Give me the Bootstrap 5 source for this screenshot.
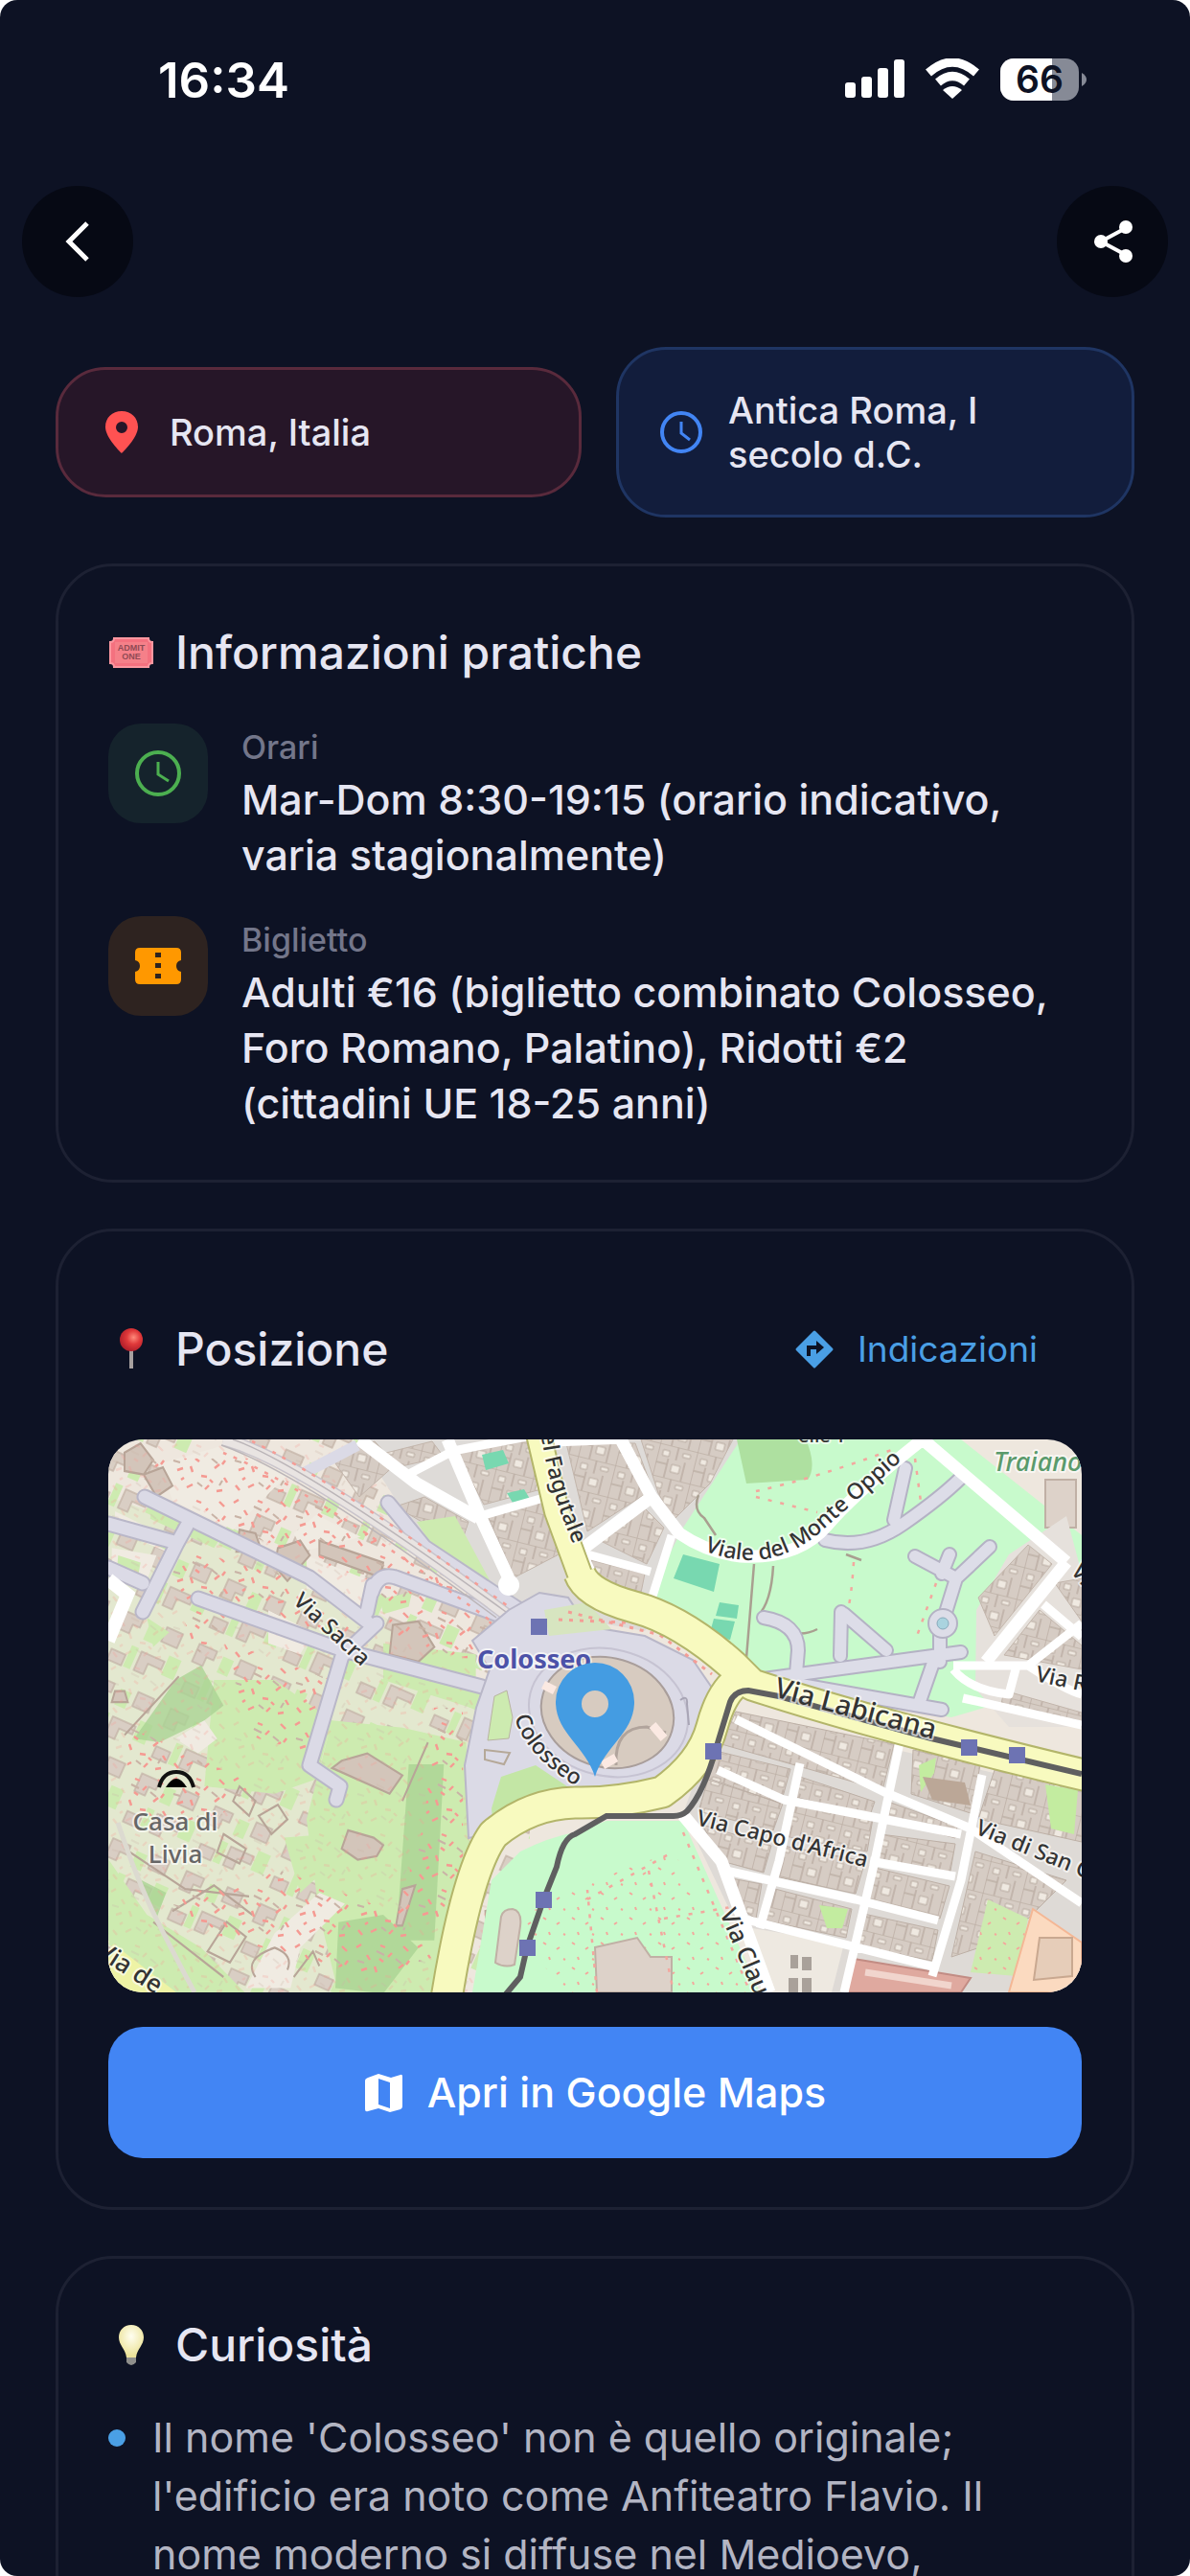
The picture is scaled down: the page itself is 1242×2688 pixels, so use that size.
<!DOCTYPE html>
<html lang="it">
<head>
<meta charset="utf-8">
<meta name="viewport" content="width=device-width, initial-scale=1">
<title>Colosseo</title>
<link href="https://cdn.jsdelivr.net/npm/bootstrap@5.3.0/dist/css/bootstrap.min.css" rel="stylesheet">
<style>
  html { background: #fff; }
  body { background: #fff; color: #e6e6f2; font-family: Inter, "Open Sans", sans-serif; }
  .screen { background: #0d1224; border-radius: 18px; height: 100vh; overflow: hidden; }
  .statusbar { height: 168px; padding: 0 108px 0 165px; }
  .clock-text { font-size: 51px; line-height: 60px; font-weight: 600; color: #fff; }
  .topbar { padding: 26px 23px 0; }
  .round-btn { width: 116px; height: 116px; border: 0; border-radius: 50%; background: #060914; color: #fff; padding: 0; }
  .round-btn:hover { background: #000; color: #fff; }
  .content { padding: 52px 58px 0; }
  .pills { gap: 36px; margin-bottom: 48px; }
  .pill { flex: 1 1 0; border: 3px solid; border-radius: 52px; padding: 40px; gap: 24px; font-size: 38px; line-height: 46px; font-weight: 500; }
  .pill-place { background: #261628; border-color: #592a3c; padding: 42px 44px; gap: 28px; }
  .pill-age { background: #121d3c; border-color: #1f3563; }
  .panel { border: 3px solid #1d2133; border-radius: 60px; padding: 51px 52px; margin-bottom: 48px; }
  .panel-title { font-size: 48px; line-height: 78px; font-weight: 500; margin: 0; gap: 22px; }
  .emoji { width: 48px; height: 48px; flex: none; }
  .info { gap: 35px; margin-top: 35px; }
  .tile { width: 104px; height: 104px; border-radius: 34px; flex: none; }
  .tile-hours { background: #15232c; }
  .tile-ticket { background: #2e2320; }
  .info-label { font-size: 34px; line-height: 50px; font-weight: 500; color: #73768a; margin: 0; }
  .info-text { font-size: 43px; line-height: 58px; font-weight: 500; margin: 0; }
  .dir-link { color: #4a9fe5; font-size: 37px; line-height: 144px; gap: 24px; padding: 0 46px 0 0; text-decoration: none; }
  .map { border-radius: 36px; overflow: hidden; margin: 22px 0 36px; }
  .map svg { display: block; width: 100%; height: auto; }
  .maps-btn { background: #4285f4; color: #fff; border: 0; border-radius: 36px; font-size: 43px; line-height: 57px; font-weight: 500; padding: 40px; gap: 24px; }
  .maps-btn:hover { background: #3574e0; color: #fff; }
  .facts { margin-top: 27px; }
  .fact { gap: 28px; font-size: 43px; line-height: 61px; color: #b3b5c3; }
  .dot { width: 18px; height: 18px; border-radius: 50%; background: #4a9fe5; flex: none; margin-top: 22px; }
</style>
<script src="https://cdn.jsdelivr.net/npm/bootstrap@5.3.0/dist/js/bootstrap.bundle.min.js"></script>
</head>
<body>
<div class="screen">
  <header>
    <div class="statusbar d-flex justify-content-between align-items-center">
      <span class="clock-text">16:34</span>
      <svg width="252" height="46" viewBox="0 0 252 46" aria-label="Segnale, Wi-Fi, batteria 66%">
        <g fill="#fff">
          <rect x="0" y="25" width="11" height="16" rx="3"/><rect x="17" y="19" width="11" height="22" rx="3"/>
          <rect x="34" y="10" width="11" height="31" rx="3"/><rect x="51" y="1" width="11" height="40" rx="3"/>
        </g>
        <g fill="none" stroke="#fff" stroke-width="9">
          <path d="M87 15Q112-7 137 15"/><path d="M97 25Q112 12 127 25"/>
        </g>
        <path d="M112 42l-10-9q10-8 20 0z" fill="#fff"/>
        <clipPath id="bat"><rect x="162" y="0" width="82" height="44" rx="14"/></clipPath>
        <g clip-path="url(#bat)"><rect x="162" width="82" height="44" fill="#868a96"/><rect x="162" width="54" height="44" fill="#fff"/></g>
        <path d="M247 15q5 3 5 7t-5 7z" fill="#868a96"/>
        <text x="203" y="36" text-anchor="middle" font-family="Inter, sans-serif" font-weight="600" font-size="39" fill="#0d1224">66</text>
      </svg>
    </div>
    <nav class="topbar d-flex justify-content-between">
      <button type="button" class="btn round-btn d-flex align-items-center justify-content-center" aria-label="Indietro">
        <svg width="60" height="60" viewBox="0 0 60 60" fill="none" stroke="#fff" stroke-width="5"><path d="M40 11L21 30l19 19"/></svg>
      </button>
      <button type="button" class="btn round-btn d-flex align-items-center justify-content-center" aria-label="Condividi">
        <svg width="60" height="60" viewBox="0 0 60 60"><path d="M44 16L18 30l26 14" fill="none" stroke="#fff" stroke-width="4"/><g fill="#fff"><circle cx="44" cy="15" r="7"/><circle cx="18" cy="30" r="7"/><circle cx="44" cy="45" r="7"/></g></svg>
      </button>
    </nav>
  </header>

  <main class="content">
    <div class="pills d-flex align-items-center">
      <div class="pill pill-place d-flex align-items-center">
        <svg class="flex-shrink-0" width="44" height="46" viewBox="0 0 44 46"><path fill="#ff5252" fill-rule="evenodd" d="M22 1C12 1 5 8 5 17.500 5 29 22 45 22 45S39 29 39 17.500C39 8 32 1 22 1zm0 11a6 6 0 1 1 0 12 6 6 0 0 1 0-12z"/></svg>
        <span>Roma, Italia</span>
      </div>
      <div class="pill pill-age d-flex align-items-center">
        <svg class="flex-shrink-0" width="50" height="50" viewBox="0 0 50 50" fill="none" stroke="#4285f4" stroke-width="4"><circle cx="25" cy="25" r="20"/><path d="M25 14v12l9 7" stroke-width="3"/></svg>
        <span>Antica Roma, I<br>secolo d.C.</span>
      </div>
    </div>

    <section class="panel">
      <h2 class="panel-title d-flex align-items-center">
        <svg class="emoji" viewBox="0 0 48 48"><path fill="#f4717f" stroke="#fb97a0" stroke-width="2" d="M6 9h36q0 4 4 4v22q-4 0-4 4H6q0-4-4-4V13q4 0 4-4z"/><rect x="7" y="13" width="34" height="22" fill="#f58089"/><g fill="#8f4a54" font-family="Liberation Sans, sans-serif" font-weight="700" font-size="9" text-anchor="middle"><text x="24" y="22">ADMIT</text><text x="24" y="31">ONE</text></g></svg>
        Informazioni pratiche
      </h2>
      <div class="info d-flex">
        <div class="tile tile-hours d-flex align-items-center justify-content-center">
          <svg width="52" height="52" viewBox="0 0 52 52" fill="none" stroke="#4caf50" stroke-width="4"><circle cx="26" cy="26" r="22"/><path d="M26 14v13l11 7" stroke-width="3"/></svg>
        </div>
        <div><p class="info-label">Orari</p><p class="info-text">Mar-Dom 8:30-19:15 (orario indicativo, varia stagionalmente)</p></div>
      </div>
      <div class="info d-flex">
        <div class="tile tile-ticket d-flex align-items-center justify-content-center">
          <svg width="52" height="52" viewBox="0 0 52 52"><path fill="#ff9800" d="M7 7h38q5 0 5 5v8q-5 1-5 6t5 6v8q0 5-5 5H7q-5 0-5-5v-8q5-1 5-6t-5-6v-8q0-5 5-5z"/><path fill="#2e2320" d="M23 12h6v5h-6zM23 23h6v5h-6zM23 34h6v5h-6z"/></svg>
        </div>
        <div><p class="info-label">Biglietto</p><p class="info-text">Adulti €16 (biglietto combinato Colosseo, Foro Romano, Palatino), Ridotti €2<br>(cittadini UE 18-25 anni)</p></div>
      </div>
    </section>

    <section class="panel">
      <div class="d-flex justify-content-between align-items-center">
        <h2 class="panel-title d-flex align-items-center">
          <svg class="emoji" viewBox="0 0 48 48"><defs><radialGradient id="pinRed" cx=".6" cy=".4" r=".6"><stop offset="0" stop-color="#ff8a7a"/><stop offset=".5" stop-color="#e0393a"/><stop offset="1" stop-color="#b3202b"/></radialGradient></defs><path d="M24 22v22" stroke="#a7a09f" stroke-width="4"/><circle cx="24" cy="14" r="12" fill="url(#pinRed)"/></svg>
          Posizione
        </h2>
        <a href="#indicazioni" class="dir-link d-flex align-items-center">
          <svg width="42" height="42" viewBox="0 0 42 42"><path d="M21 3l18 18-18 18L3 21z" fill="#4a9fe5" stroke="#4a9fe5" stroke-width="3" stroke-linejoin="round"/><path d="M15 28v-9h9" fill="none" stroke="#0d1224" stroke-width="4"/><path d="M23 12l8 7-8 7z" fill="#0d1224"/></svg>
          Indicazioni
        </a>
      </div>
      <div class="map">
      <svg viewBox="0 0 1016 577" role="img" aria-label="Mappa del Colosseo">
        <defs>
          <pattern id="ruins" width="64" height="58" patternUnits="userSpaceOnUse">
            <path d="M3 8l5-3M14 16l3 5M28 6l5 2M40 14l-4 4M52 7l5 5M8 32l6-2M22 28l2 6M33 38l6 1M47 30l5-4M57 40l3 5M5 48l4 5M18 50l6-3M37 52l4-4M49 54l6-1M27 20l4 3M58 22l-3 4M12 42l3-2M42 42l3 3" stroke="#f59a92" stroke-width="2.400"/>
            <path d="M24 12l8 4M4 22l7 2M44 20l6 5M29 45l5 4M52 48l3-5" stroke="#c9b3a6" stroke-width="2"/>
          </pattern>
          <pattern id="bits" width="84" height="74" patternUnits="userSpaceOnUse" patternTransform="rotate(24)">
            <g fill="#d9cec4" stroke="#c5b5a9" stroke-width="1.500"><path d="M6 8h20v10h-8v10H6zM52 6h18v16H52zM38 40h26v9H49v12H38zM8 50h16v12H8z"/></g>
            <path fill="#cdebb0" d="M34 10h12v18H34zM66 32h14v22H66zM26 38h8v24h-8z"/>
          </pattern>
          <pattern id="houses" width="40" height="34" patternUnits="userSpaceOnUse" patternTransform="rotate(14)">
            <rect width="40" height="34" fill="#d6ccc4"/>
            <path d="M0 0h40M0 0v34M20 0v14M30 14v20M0 20h12M12 14v20" stroke="#bdb0a6" stroke-width="1.600"/>
            <path d="M17 19h9v8h-9zM5 6h7v6H5zM26 5h8v4h-8z" fill="#efe9e1" stroke="#b9aca2"/>
          </pattern>
          <pattern id="parkdots" width="30" height="26" patternUnits="userSpaceOnUse"><path d="M4 5l3 2M18 12l3-2M10 20l1 3M25 22l2 1" stroke="#f4a79c" stroke-width="2"/></pattern>
          <path id="pSacra" d="M192 170L280 252"/>
          <path id="pCol" d="M424 290Q436 334 504 371"/>
          <path id="pOppio" d="M622 116Q690 143 744 96T850 2"/>
          <path id="pFag" d="M452-6Q458 56 504 150"/>
        </defs>
        <rect width="1016" height="577" fill="#eee7de"/>
        <!-- archaeological area, west -->
        <path d="M0 60L120 100 250 160 400 260 420 400 350 577H0z" fill="#e3e8cf"/>
        <rect width="440" height="577" fill="url(#bits)"/>
        <g transform="matrix(.3333 0 0 .3827 -13 -13)">
          <path fill="#cdebb0" d="M40 1180L160 1330 330 1420 470 1545H200L40 1410zM740 800L960 820 1160 860 1170 1130 1090 1450 1040 1545H760L700 1330 660 1070zM900 590L1190 620V770L900 690zM370 690L560 690 740 800 690 960 560 1000 340 980zM180 200L400 290 370 330 170 250zM1010 280L1130 250 1250 470 1150 400zM1250 690L1310 740 1300 860H1220zM1250 960L1400 920 1480 980 1240 1080zM590 1120L730 1110 740 1190 640 1270zM160 520L230 560 180 600z"/>
          <path fill="#aad394" d="M120 850L250 690 330 650 400 760 340 800 200 860zM760 1350L900 1330 1010 1420 900 1545 750 1530zM130 1230L220 1270 190 1340zM980 920L1090 920 1060 1400 940 1400z" opacity=".8"/>
          <path fill="#f0ebe2" d="M200 100L400 50 600 130 430 280 240 200zM660 350L860 420 850 500 660 440zM540 500L680 560 640 620 540 590zM250 850L340 800 380 850 320 890zM560 1380L700 1270 780 1300 640 1420 610 1530H470zM690 240L830 300 650 340 620 290zM50 330L190 350 150 440 50 420zM60 230L250 310 220 340 60 280z"/>
          <path fill="#cdebb0" d="M70 350L140 370 130 420 65 400zM200 290l50 20-20 30-60-25zM890 470l100-20-10 40-80 20z"/>
          <g fill="#d3c5ba" stroke="#b8a598" stroke-width="6">
            <path d="M90 70L140 45 180 90 150 130 90 120zM150 130l60-20 30 50-50 30zM450 280l50 10 20 50-80 0zM700 310L900 370 890 410 700 350zM930 540L1010 530 1060 600 1010 640 920 620zM770 910L850 890 960 950 920 1000 740 930zM790 1100l80 20 30 20-20 30-60 10-50-30zM1220 1320l60-10 10 130-60 10zM570 330L640 310 670 350 600 420 560 380zM960 1260l40-10-40 110h-20zM60 720l30 0 10 30-50 0z"/>
            <path fill="none" d="M450 980L500 1020 480 1060 430 1020zM510 1060l60-30 30 40-50 40zM400 1110l70 40-20 40-70-30zM90 1150L280 1260 480 1280M240 1320l130-70 120 80M500 1500Q460 1450 560 1420Q620 1440 600 1480M350 1430l60-80 60 40-50 70zM620 1500l60-70 20 40M1040 860L960 1020M90 840L260 680M180 1350L400 1500"/>
          </g>
        </g>
        <path d="M40 20H150L290 110 420 190 420 240 300 210 280 150 120 90zM60 110L180 140 270 210 230 200 120 190 90 230zM120 210L230 250 220 330 150 310zM20 300L90 330 150 360 110 400 20 390zM60 480L180 450 290 490 340 540 280 560 120 520zM340 280H370V500H300L330 400z" fill="url(#ruins)"/>
        <rect width="400" height="577" fill="url(#ruins)" opacity=".25"/>

        <!-- city blocks, north -->
        <path d="M260 0H690L560 200 450 180 330 110z" fill="#dedbd8"/>
        <path d="M232 18L278 2 300 26 262 60zM290 14L338 2 350 18 306 28zM362 10L436 0 452 52 392 68zM396 80L458 64 474 118 424 144zM330 60L376 86 368 110 300 70zM478 4H550L568 52 500 96zM510 104L560 72 580 92 562 130zM500 122L560 140 556 160 510 152zM556 0H652L628 46 590 84 574 56z" fill="url(#houses)" stroke="#c2b5ab"/>
        <path d="M322 86L362 80 404 158 350 130z" fill="#cdebb0"/>
        <path d="M390 16l22-5 6 14-24 7zM416 56l18-4 6 10-18 4z" fill="#78d8b0"/>

        <!-- parks -->
        <path d="M560 170L600 92 660 0H890L1016 100V250L880 290 700 260 640 230z" fill="#c8facc"/>
        <path d="M656 0H728Q740 28 730 42L666 46Z" fill="#aee0a0"/>
        <path d="M487 410Q460 415 430 430L400 460 380 577H680L600 398 520 398z" fill="#c8facc"/>
        <path d="M430 500L480 470 590 430 670 577H470z" fill="url(#parkdots)"/>
        <path d="M600 120l38 10-6 29-42-14zM638 170l20 3-2 14-22-3zM632 187l22 3-5 19-22-4z" fill="#78d8b0"/>
        <g fill="#ddd2c9" stroke="#c0b0a5" stroke-width="2">
          <path d="M978 42h32v50h-32zM508 530l44-10 14 20 22 0v37h-78z"/>
          <path d="M410 498q2-8 12-8 10 2 8 18l-6 40q-10 4-20-2z"/>
        </g>
        <path d="M674 130L666 228M694 132Q692 170 678 184M616 58Q610 74 622 82L634 100M740 198Q720 208 704 196M770 120l16 6" fill="none" stroke="#a99f90" stroke-width="2.500"/>
        <g fill="none" stroke="#f3a79e" stroke-width="2.500" stroke-dasharray="4 9">
          <path d="M676 54Q740 40 820 10M676 60L740 76M778 128Q776 160 772 178M842 20L850 80M864 150L844 205M500 480L590 430M510 577L500 470M564 450L590 577M600 410L670 577M580 500l70-12"/>
        </g>
        <g stroke-linejoin="round" stroke-linecap="round" fill="none">
          <g stroke="#b4b2c4" stroke-width="16"><path d="M748 105Q790 116 830 88T890 40M832 30L820 84M842 122L885 145 920 112M870 140l8-20M885 145L868 200 868 232M684 186Q720 192 720 220L718 244M684 250L890 222M765 180L764 226M768 182L812 220M700 252L870 282M862 230L846 276"/></g>
          <g stroke="#dddde8" stroke-width="12"><path d="M748 105Q790 116 830 88T890 40M832 30L820 84M842 122L885 145 920 112M870 140l8-20M885 145L868 200 868 232M684 186Q720 192 720 220L718 244M684 250L890 222M765 180L764 226M768 182L812 220M700 252L870 282M862 230L846 276"/></g>
        </g>
        <circle cx="871" cy="192" r="15" fill="#dddde8" stroke="#b4b2c4" stroke-width="2"/><circle cx="871" cy="192" r="6" fill="#aad3df" stroke="#8ab"/>

        <!-- streets, east -->
        <path d="M640 280L1016 370V577H690L600 390z" fill="#dedad6"/>
        <path d="M906 178L940 120 1000 80 1016 140V300L940 300 905 260z" fill="#e6e1dc"/>
        <path d="M908 165L960 110 985 130 925 205zM935 225L972 178 1016 215V240zM988 150L1016 145V190zM935 262L1016 285V300L932 276z" fill="url(#houses)" stroke="#c2b5ab"/>
        <path d="M655 284L820 318 808 366 640 318zM634 325L712 344 702 380 622 352zM716 350L800 378 795 392 712 372zM626 355L704 380 694 408 616 388zM620 402L692 424 684 452 640 440zM712 382L798 396 792 430 706 414zM814 378L886 404 884 416 812 396zM806 412L884 422 878 456 800 440zM704 424L790 440 780 474 696 456zM796 446L878 466 868 500 790 484zM650 458L682 464 676 500 660 490zM692 468L776 490 770 520 686 502zM784 494L866 512 860 544 778 528zM840 324L910 340 900 390 838 370zM925 345L1016 365V420L908 396zM905 430L1000 460 940 520 880 540z" fill="url(#houses)" stroke="#bdb0a6"/>
        <path d="M846 340l18-8-2 16-14 20zM978 360l34 6-4 46-24-6zM742 486l30 4-6 20-16 0z" fill="#c3eca0"/>
        <path d="M850 352l44 6 6 24-40-6z" fill="#bba797"/>
        <path d="M918 480L960 500 948 560 900 556z" fill="#cdebb0"/><path d="M918 480L960 500 948 560 900 556z" fill="url(#parkdots)"/>
        <path d="M965 490L1016 525V577H940z" fill="#fbdac0" stroke="#f4b795" stroke-width="2"/><path d="M972 520h34v40l-40 4z" fill="#e6cdb9" stroke="#c9a890" stroke-width="2"/>
        <path d="M778 542L900 562 890 577H768z" fill="#dfa99f" stroke="#c28c84" stroke-width="2"/><path d="M790 556l90 14" stroke="#f1d5cd" stroke-width="7"/>
        <path d="M672 510L768 526 755 577H692z" fill="#eee9e1"/><path d="M712 538h8v14h-8zM724 540h10v14h-10zM710 562h10v15h-10zM724 562h10v15h-10z" fill="#a9a19a"/>
        <g fill="none" stroke="#fff" stroke-linejoin="round">
          <path stroke-width="13" d="M262 0L322 46 386 82M354 0L388 80 418 145M600 392L640 440 690 577M535 0L567 60 490 118M567 60L596 98Q625 118 660 122 720 125 750 90T850 0L1000 128M1000 128L916 232"/>
          <path stroke-width="9" d="M310 38L360 12 442-4M388 80L458 60M500 120L566 138M588 100L566 170M495 118L512 155M540 0L440 4M655 292L810 368 900 406 1016 484M636 345L705 376 798 394 890 412M722 338L700 440 680 510M826 316L800 440 768 577M912 350L890 460 860 560M645 450L780 480 866 502M662 500L860 550M795 440L884 456M882 236L960 236Q1000 262 1016 266M960 236L1016 192M976 172L1016 206M882 240Q900 262 940 266L948 236M892 270L1016 298"/>
        </g>

        <!-- pedestrian ways, west -->
        <g stroke-linejoin="round" stroke-linecap="round" fill="none">
          <path stroke="#b9b7c8" stroke-width="17" d="M38 60L210 144 270 190M0 88L72 108 36 180M82 90L72 108M0 134L36 150M94 166L245 220 390 258M280 192L244 226 210 340 242 362 238 376M275 160Q282 138 300 144L440 195M292 66L330 112 440 185M270 180L276 152"/>
          <path stroke="#dbdae6" stroke-width="13" d="M38 60L210 144 270 190M0 88L72 108 36 180M82 90L72 108M0 134L36 150M94 166L245 220 390 258M280 192L244 226 210 340 242 362 238 376M275 160Q282 138 300 144L440 195M292 66L330 112 440 185M270 180L276 152"/>
        </g>
        <path d="M0 146L20 162 0 210" fill="none" stroke="#fff" stroke-width="14"/>
        <path d="M195 40L260 6" stroke="#dbdae6" stroke-width="12"/>
        <path d="M120 0Q200 20 420 186L500 200" fill="none" stroke="#c9c4cb" stroke-width="14"/>
        <path d="M120 0Q200 20 420 186L500 200" fill="none" stroke="#e9e4e2" stroke-width="11"/>
        <path d="M130 0Q200 24 415 180M118 6Q200 34 405 186" fill="none" stroke="#bbb5b8" stroke-width="1.500"/>
        <path d="M150 2Q230 40 420 176M120 14Q210 50 400 190" fill="none" stroke="#f59d96" stroke-width="2.500" stroke-dasharray="4 8"/>
        <path d="M10 400Q30 460 50 500T90 577" fill="none" stroke="#dcdad0" stroke-width="5"/>
        <path d="M418 178L450 160 480 165 500 195 560 205 610 230 632 262 612 330 575 362 490 372 440 384 404 410 376 416 372 340 384 280 398 240 380 210z" fill="#dbdae6" stroke="#b9b7c8" stroke-width="2"/>
        <path d="M403 268L416 262 422 290 418 312 396 314z" fill="#cdebb0" stroke="#b8b4a0"/><path d="M393 324l26 3-6 12-20-5z" fill="none" stroke="#b5a898" stroke-width="2"/>
        <path d="M400 385L410 352 446 340 482 364 440 384 402 408z" fill="#c3e6a5"/>
        <path d="M455 178L500 170 525 198 460 205z" fill="#d7e5c0"/>
        <circle cx="418" cy="152" r="11" fill="#fff"/>
        <path d="M470 188L560 192 630 245M480 180L580 205" stroke="#f59d96" stroke-width="3" stroke-dasharray="4 7" fill="none"/>
        <ellipse cx="522" cy="285" rx="84" ry="66" transform="rotate(14 522 285)" fill="none" stroke="#c6c3d2" stroke-width="2"/>
        <ellipse cx="521" cy="285" rx="70" ry="57" transform="rotate(16 521 285)" fill="#d7cbc0" stroke="#a99e9b" stroke-width="2"/>
        <path d="M530 340Q528 300 562 300L582 306" fill="none" stroke="#b1a49c" stroke-width="3"/>
        <path d="M568 298l12 14M530 332l-14 8M454 256l12 6" stroke="#fbe9e2" stroke-width="9"/>
        <path d="M597 272q8-6 7 4l2 22" fill="none" stroke="#a8a5b5" stroke-width="2"/>

        <!-- main roads -->
        <g fill="none" stroke-linejoin="round">
          <g stroke="#b3b56a" stroke-width="35">
            <path stroke-width="28" d="M448-10L468 75 494 146"/><path d="M492 140Q500 162 549 175T652 236L672 256Q800 298 1026 352"/><path d="M660 250Q640 262 630 300T578 368Q530 380 487 379 440 380 402 412 374 450 352 590"/>
          </g>
          <g stroke="#f8fabf" stroke-width="31">
            <path stroke-width="24" d="M448-10L468 75 494 146"/><path d="M492 140Q500 162 549 175T652 236L672 256Q800 298 1026 352"/><path d="M660 250Q640 262 630 300T578 368Q530 380 487 379 440 380 402 412 374 450 352 590"/>
          </g>
        </g>
        <path d="M-5 540L60 590" stroke="#eef3a5" stroke-width="34"/>
        <path d="M1016 349L859 312 700 268 668 262Q654 262 649 274L635 320Q622 368 604 388 598 393 590 393H520L487 412Q474 416 468 446L454 481 437 530 430 561 414 580" fill="none" stroke="#5f5f60" stroke-width="6"/>
        <path fill="#6d73b3" d="M441 187h17v17h-17zM446 472h17v17h-17zM429 522h17v17h-17zM623 317h17v17h-17zM890 313h17v17h-17zM940 321h17v17h-17z"/>
        <path d="M53 363q4-16 18-16t18 16" fill="none" stroke="#111" stroke-width="4"/><path d="M60 363q11-18 22 0z" fill="#000"/>

        <!-- labels -->
        <g font-family="Noto Sans, sans-serif" font-size="23" font-weight="500" fill="#333" stroke="#fff" stroke-opacity=".65" stroke-width="4" paint-order="stroke" stroke-linejoin="round">
          <text><textPath href="#pSacra">Via Sacra</textPath></text>
          <text><textPath href="#pCol">Colosseo</textPath></text>
          <text><textPath href="#pOppio">Viale del Monte Oppio</textPath></text>
          <text><textPath href="#pFag">el Fagutale</textPath></text>
          <text transform="translate(694 268) rotate(15)" font-size="29">Via Labicana</text>
          <text transform="translate(613 402) rotate(14)">Via Capo d'Africa</text>
          <text transform="translate(967 252) rotate(12)">Via R</text>
          <text transform="translate(904 411) rotate(22)">Via di San G</text>
          <text transform="translate(638 494) rotate(67)" font-size="25">Via Clau</text>
          <text transform="translate(-14 538) rotate(33)" font-size="26">Via de</text>
          <text transform="translate(1004 138) rotate(50)">Vi</text>
          <text x="720" y="3" font-size="20">elle T</text>
          <g text-anchor="middle" font-size="26" fill="#666"><text x="70" y="408">Casa di</text><text x="70" y="442">Livia</text></g>
          <text x="924" y="33" font-size="27" font-style="italic" fill="#5a9a6c">Traiano</text>
          <text x="385" y="239" font-size="27" font-weight="700" fill="#4d52a8">Colosseo</text>
        </g>
        <path fill="#449ce2" fill-rule="evenodd" d="M508 352C498 320 467 306 467 274a41 41 0 0 1 82 0c0 32-31 46-41 78zm0-90a14 14 0 1 0 0 28 14 14 0 0 0 0-28z"/>
      </svg>
      </div>
      <button type="button" class="btn maps-btn w-100 d-flex align-items-center justify-content-center">
        <svg width="42" height="42" viewBox="0 0 42 42"><path fill="#fff" fill-rule="evenodd" d="M4 5l11-4 13 4 10-3q2-1 2 2v31q0 2-2 3l-11 3-12-4-11 3q-3 1-3-2V8q0-2 3-3zm11 1v27l12 4V10z"/></svg>
        Apri in Google Maps
      </button>
    </section>

    <section class="panel">
      <h2 class="panel-title d-flex align-items-center">
        <svg class="emoji" viewBox="0 0 48 48"><defs><radialGradient id="glow" cx=".5" cy=".35" r=".6"><stop offset="0" stop-color="#fffef0"/><stop offset="1" stop-color="#ece39a"/></radialGradient></defs><path fill="url(#glow)" d="M24 3c-8 0-13 6-13 13 0 8 7 12 8 21h10c1-9 8-13 8-21 0-7-5-13-13-13z"/><path fill="#8f8f8c" d="M19 37h10v5q-5 6-10 0z"/></svg>
        Curiosità
      </h2>
      <ul class="facts list-unstyled mb-0">
        <li class="fact d-flex"><span class="dot"></span><span>Il nome 'Colosseo' non è quello originale; l'edificio era noto come Anfiteatro Flavio. Il<br>nome moderno si diffuse nel Medioevo,</span></li>
      </ul>
    </section>
  </main>
</div>
</body>
</html>
